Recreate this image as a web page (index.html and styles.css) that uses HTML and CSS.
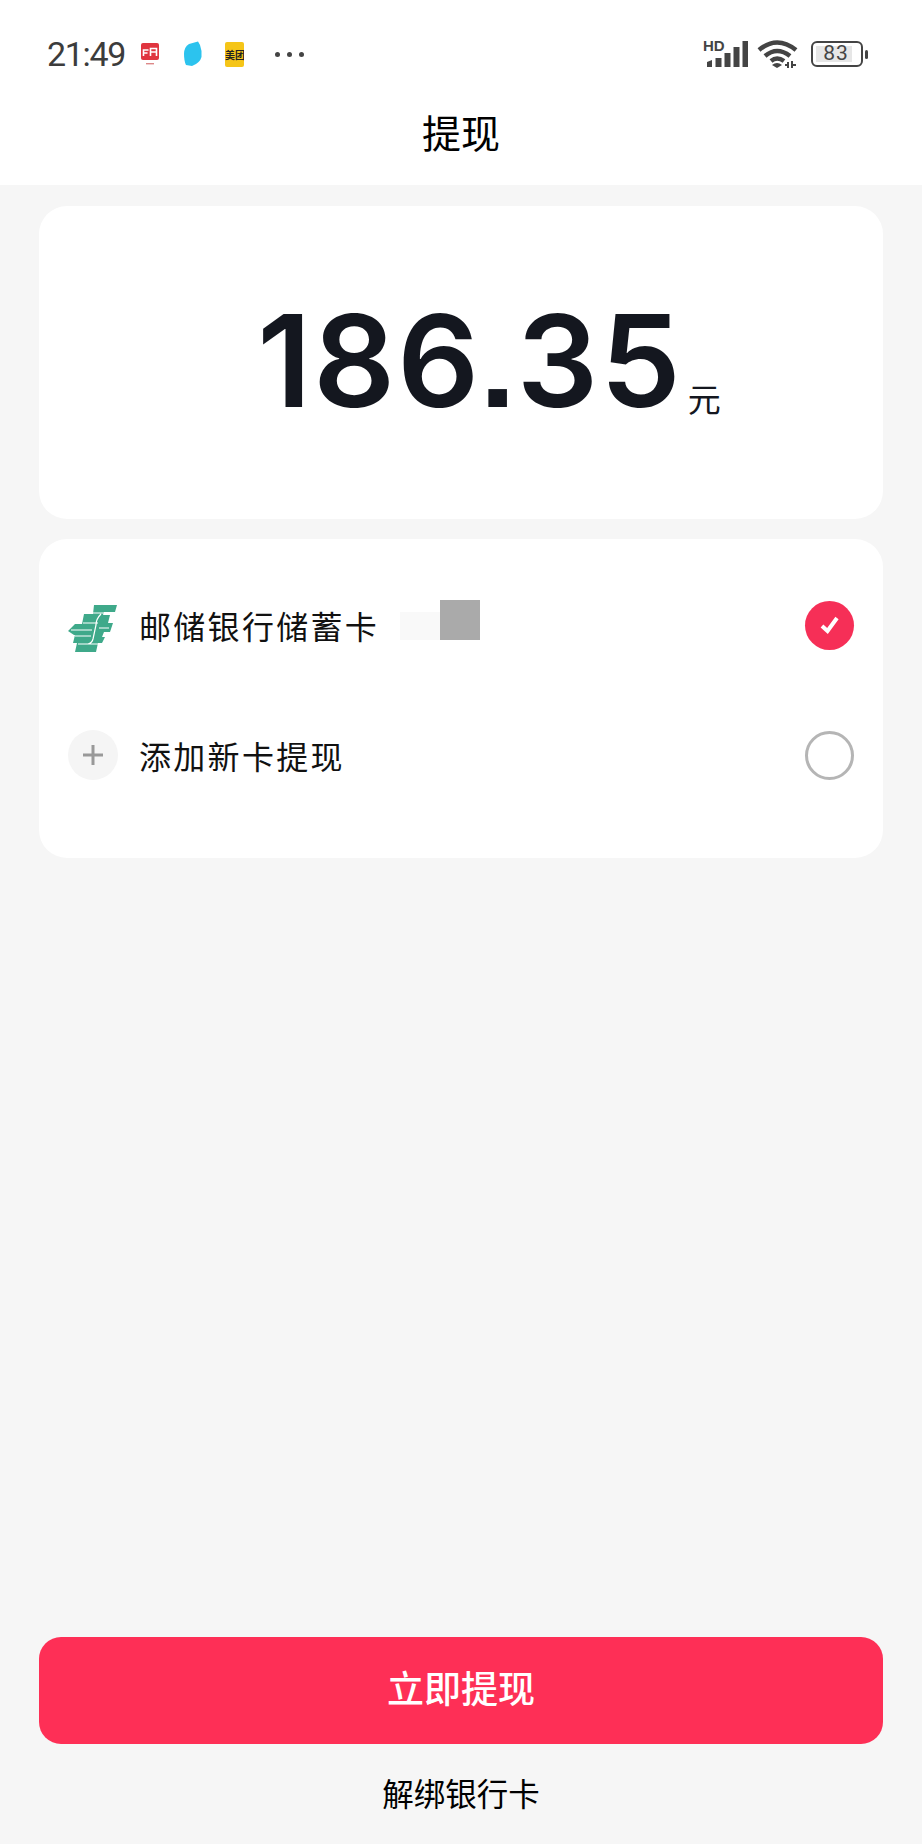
FILE: index.html
```html
<!DOCTYPE html>
<html lang="zh-CN">

<head>
    <meta charset="UTF-8">
    <meta name="viewport" content="width=device-width, initial-scale=1.0">
    <title>提现</title>
    <link rel="stylesheet" href="styles.css">
</head>

<body>
    <header class="top-bar">
        <div class="status-bar">
            <div class="status-left">
                <span class="clock">21:49</span>
                <svg class="app-icon" width="18" height="22" viewBox="0 0 18 22">
                    <rect width="18" height="17" rx="2" fill="#e0353f" />
                    <path d="M2.500 13V7h5M2.500 10h4M9.500 13V5.500h6V13M9.500 9h6" fill="none" stroke="#fff" stroke-width="1.600" />
                    <rect x="5" y="20" width="8" height="1.400" fill="#d88" />
                </svg>
                <svg class="app-icon" width="18" height="26" viewBox="0 0 18 26">
                    <path d="M5 3 L14 0.500 L16 4 Q18 9 17.500 16 Q16 22 8 25 L2 24 Q0 20 0 13 Q0 6 5 3Z" fill="#2cc3ee" />
                </svg>
                <div class="app-icon meituan">美团</div>
                <div class="more-dots"><i></i><i></i><i></i></div>
            </div>
            <div class="status-right">
                <div class="signal">
                    <span class="hd">HD</span>
                    <svg width="42" height="26" viewBox="0 0 42 26">
                        <path d="M1 26v-5l5-2v7zM9.500 26v-9h6v9zM18.500 26V12h6v14zM27.500 26V6h6v20zM36.500 26V0h6v26z" fill="#444" />
                    </svg>
                </div>
                <svg class="wifi" width="41" height="29" viewBox="0 0 41 29">
                    <path d="M2 10Q20-5 39 10M8 16Q20 6 33 16M14 21Q20 16 27 21" fill="none" stroke="#444" stroke-width="4.500" />
                    <path d="M15 25Q20 21 25 25L20 28Z" fill="#444" />
                    <path d="M31 22v6M35 21v7M28 25h3M35 25h4" stroke="#444" stroke-width="2" />
                </svg>
                <div class="battery">
                    <div class="battery-body"><span class="battery-level">83</span></div>
                    <i class="battery-nub"></i>
                </div>
            </div>
        </div>
        <h1 class="page-title">提现</h1>
    </header>

    <main class="content">
        <section class="card amount-card">
            <span class="amount">186.35</span><span class="amount-unit">元</span>
        </section>

        <section class="card pay-list">
            <div class="pay-row">
                <svg class="row-icon bank-logo" width="50" height="48" viewBox="0 0 50 48">
                    <path d="M26 0H49L47 7H36L35 10H42L40 18H45L42 27H36L34 32H37L34 38H30L28 47H7L9 38H5L7 30H6L0 26L7 19H14L16 9H25Z" fill="#3fa98a" />
                    <path d="M24 8H42M15 18H30M3 25H24M31 23H41M7 31H23M10 39H30M33 9Q28 14 28 20L25 34Q24 38 20 39" fill="none" stroke="#fff" stroke-width="1.200" />
                </svg>
                <span class="row-text">邮储银行储蓄卡</span>
                <div class="card-mask"><i class="mask-faint"></i><i class="mask-grey"></i></div>
                <span class="radio radio-on">
                    <svg width="22" height="20" viewBox="0 0 22 20">
                        <path d="M3 11L8.500 16L18 3" fill="none" stroke="#fff" stroke-width="4" />
                    </svg>
                </span>
            </div>
            <div class="pay-row">
                <span class="row-icon plus-icon">
                    <svg width="20" height="20" viewBox="0 0 20 20">
                        <path d="M10 0V20M0 10H20" stroke="#999" stroke-width="3" />
                    </svg>
                </span>
                <span class="row-text">添加新卡提现</span>
                <span class="radio"></span>
            </div>
        </section>

        <div class="actions">
            <button class="submit-btn">立即提现</button>
            <a class="unbind-link">解绑银行卡</a>
        </div>
    </main>
</body>

</html>
```

FILE: styles.css
```css
body {
    display: flex;
    flex-direction: column;
    height: 1844px;
    margin: 0;
    overflow: hidden;
    background-color: #f6f6f6;
    color: #000;
    font-family: "Noto Sans CJK SC", "Liberation Sans", sans-serif;
}

.top-bar {
    height: 185px;
    background-color: #fff;
}

.status-bar {
    display: flex;
    justify-content: space-between;
    align-items: center;
    height: 28px;
    padding: 40px 54px 0 47px;
}

.status-left,
.status-right {
    display: flex;
    align-items: center;
}

.clock {
    width: 94px;
    color: #3c3c3c;
    font-family: Roboto, sans-serif;
    font-size: 34px;
    line-height: 28px;
    letter-spacing: -1.300px;
}

.app-icon {
    flex: none;
    margin-right: 25px;
}

.meituan {
    width: 19px;
    height: 25px;
    border-radius: 2px;
    margin-left: -2px;
    margin-right: 31px;
    background-color: #f5c518;
    color: #222;
    font-size: 10px;
    font-weight: 700;
    line-height: 25px;
    text-align: center;
    white-space: nowrap;
    overflow: hidden;
}

.more-dots {
    display: flex;
    gap: 7px;
}

.more-dots i {
    width: 5px;
    height: 5px;
    border-radius: 50%;
    background-color: #444;
}

.status-right {
    gap: 11px;
}

.signal {
    position: relative;
    width: 44px;
    height: 26px;
}

.hd {
    position: absolute;
    top: -2px;
    left: -1px;
    color: #444;
    font-family: "Liberation Sans", sans-serif;
    font-size: 15px;
    font-weight: 700;
    line-height: 13px;
}

.signal svg {
    position: absolute;
    top: 0;
    right: 0;
}

.wifi {
    margin-left: -2px;
    margin-right: 2px;
}

.battery {
    display: flex;
    align-items: center;
    gap: 2px;
}

.battery-body {
    box-sizing: border-box;
    width: 52px;
    height: 26px;
    padding: 3px 9px 3px 3px;
    border: 2.500px solid #444;
    border-radius: 6px;
}

.battery-level {
    display: block;
    height: 100%;
    padding-left: 4px;
    background-color: #e6e6e6;
    color: #444;
    font-family: Roboto, sans-serif;
    font-size: 21px;
    line-height: 15px;
    letter-spacing: 1px;
    text-align: center;
}

.battery-nub {
    width: 3px;
    height: 9px;
    border-radius: 2px;
    background-color: #444;
}

.page-title {
    margin: 38px 0 0;
    font-size: 39px;
    font-weight: 400;
    line-height: 50px;
    text-align: center;
}

.content {
    display: flex;
    flex: 1;
    flex-direction: column;
    padding: 21px 39px 0;
}

.card {
    background-color: #fff;
    border-radius: 28px;
}

.amount-card {
    box-sizing: border-box;
    height: 313px;
    margin-bottom: 20px;
    padding: 80px 0 0 56px;
    line-height: 150px;
    text-align: center;
    white-space: nowrap;
}

.amount {
    color: #14171f;
    font-family: Inter, sans-serif;
    font-size: 128px;
    font-weight: 600;
    letter-spacing: 2px;
    font-feature-settings: "ss07";
}

.amount-unit {
    margin-left: 5px;
    color: #14171f;
    font-size: 33px;
    vertical-align: -5px;
}

.pay-list {
    box-sizing: border-box;
    height: 319px;
    padding: 21px 29px 0 29px;
}

.pay-row {
    display: flex;
    align-items: center;
    height: 130px;
}

.row-icon {
    flex: none;
    margin-right: 21px;
}

.bank-logo {
    margin-top: 7px;
}

.plus-icon {
    display: flex;
    justify-content: center;
    align-items: center;
    width: 50px;
    height: 50px;
    border-radius: 50%;
    background-color: #f5f5f5;
}

.row-text {
    font-size: 32px;
    letter-spacing: 2.300px;
    line-height: 40px;
    color: #111;
}

.card-mask {
    display: flex;
    align-items: flex-end;
    height: 40px;
    margin: -10px 0 0 21px;
}

.mask-faint {
    width: 40px;
    height: 28px;
    background-color: #f9f9f9;
}

.mask-grey {
    width: 40px;
    height: 40px;
    background-color: #aaa;
}

.radio {
    box-sizing: border-box;
    display: flex;
    justify-content: center;
    align-items: center;
    width: 49px;
    height: 49px;
    margin-left: auto;
    border: 3px solid #b5b5b5;
    border-radius: 50%;
}

.radio-on {
    border: 0;
    background-color: #f62f57;
}

.actions {
    display: flex;
    flex-direction: column;
    align-items: center;
    margin-top: auto;
    padding-bottom: 32px;
}

.submit-btn {
    width: 100%;
    height: 107px;
    padding: 0 0 8px;
    border: 0;
    border-radius: 22px;
    background-color: #fe2f56;
    color: #fff;
    font-family: inherit;
    font-size: 37px;
    font-weight: 500;
}

.unbind-link {
    margin-top: 28px;
    font-size: 31.500px;
    line-height: 40px;
}
```
